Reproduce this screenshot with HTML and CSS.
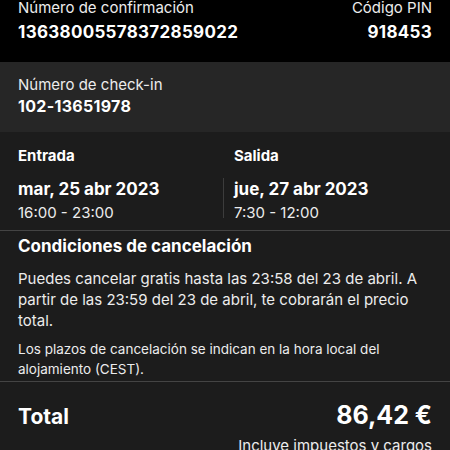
FILE: index.html
```html
<!DOCTYPE html>
<html lang="es">
<head>
    <meta charset="UTF-8">
    <meta name="viewport" content="width=device-width, initial-scale=1.0">
    <title>Detalles de la reserva</title>
    <link rel="stylesheet" href="styles.css">
</head>
<body>
    <div class="booking">
        <div class="section top">
            <div class="field">
                <div class="label">Número de confirmación</div>
                <div class="value">13638005578372859022</div>
            </div>
            <div class="field right">
                <div class="label">Código PIN</div>
                <div class="value">918453</div>
            </div>
        </div>

        <div class="section checkin">
            <div class="label">Número de check-in</div>
            <div class="value small">102-13651978</div>
        </div>

        <div class="section dates">
            <div class="date-col">
                <div class="date-title">Entrada</div>
                <div class="date">mar, 25 abr 2023</div>
                <div class="hours">16:00 - 23:00</div>
            </div>
            <div class="date-col second">
                <div class="date-title">Salida</div>
                <div class="date">jue, 27 abr 2023</div>
                <div class="hours">7:30 - 12:00</div>
            </div>
        </div>

        <div class="section policy">
            <h2>Condiciones de cancelación</h2>
            <p>Puedes cancelar gratis hasta las 23:58 del 23 de abril. A partir de las 23:59 del 23 de abril, te cobrarán el precio total.</p>
            <p class="note">Los plazos de cancelación se indican en la hora local del alojamiento (CEST).</p>
        </div>

        <div class="section total">
            <div class="total-row">
                <span class="total-label">Total</span>
                <span class="total-price">86,42 €</span>
            </div>
            <div class="total-note">Incluye impuestos y cargos</div>
        </div>
    </div>
</body>
</html>
```

FILE: styles.css
```css
body {
    margin: 0;
    padding: 0;
    background-color: #1c1c1c;
    color: #fff;
    font-family: Inter, "Noto Sans", sans-serif;
    overflow: hidden;
}
.booking {
    width: 450px;
}
.section {
    padding: 0 18px;
}
.top {
    background-color: #000;
    height: 62px;
    display: flex;
    justify-content: space-between;
}
.field.right {
    text-align: right;
}
.label {
    font-size: 15px;
    line-height: 18px;
    color: #ececec;
}
.top .label {
    margin-top: -1px;
}
.value {
    font-size: 17px;
    font-weight: 700;
    line-height: 20px;
    margin-top: 5px;
    letter-spacing: 0.3px;
}
.checkin {
    background-color: #262626;
    height: 70px;
    padding-top: 14px;
    box-sizing: border-box;
}
.value.small {
    font-size: 16px;
    margin-top: 2px;
}
.dates {
    display: flex;
    padding: 0;
    height: 98px;
    border-bottom: 1px solid #444;
}
.date-col {
    width: 206px;
    padding-left: 18px;
    padding-top: 14px;
}
.date-col.second {
    padding-left: 10px;
    position: relative;
}
.date-col.second::before {
    content: "";
    position: absolute;
    left: -1px;
    top: 46px;
    height: 40px;
    border-left: 1px solid #3c3c3c;
}
.date-title {
    font-size: 15px;
    font-weight: 700;
    line-height: 20px;
}
.date {
    font-size: 17px;
    font-weight: 700;
    line-height: 22px;
    margin-top: 12px;
}
.hours {
    font-size: 15px;
    line-height: 20px;
    margin-top: 3px;
    color: #ececec;
}
.policy {
    height: 148px;
    border-bottom: 1px solid #444;
    box-sizing: border-box;
}
.policy h2 {
    font-size: 17px;
    font-weight: 700;
    line-height: 24px;
    margin: 3px 0 0;
}
.policy p {
    font-size: 15px;
    line-height: 21px;
    margin: 10px 0 0;
    color: #ececec;
}
.policy p.note {
    font-size: 13.5px;
    line-height: 20px;
    margin-top: 8px;
}
.total-row {
    display: flex;
    justify-content: space-between;
    align-items: baseline;
    margin-top: 18px;
}
.total-label {
    font-size: 21px;
    font-weight: 700;
}
.total-price {
    font-size: 25px;
    font-weight: 700;
}
.total-note {
    text-align: right;
    font-size: 15px;
    margin-top: 6px;
    color: #ececec;
}
```
